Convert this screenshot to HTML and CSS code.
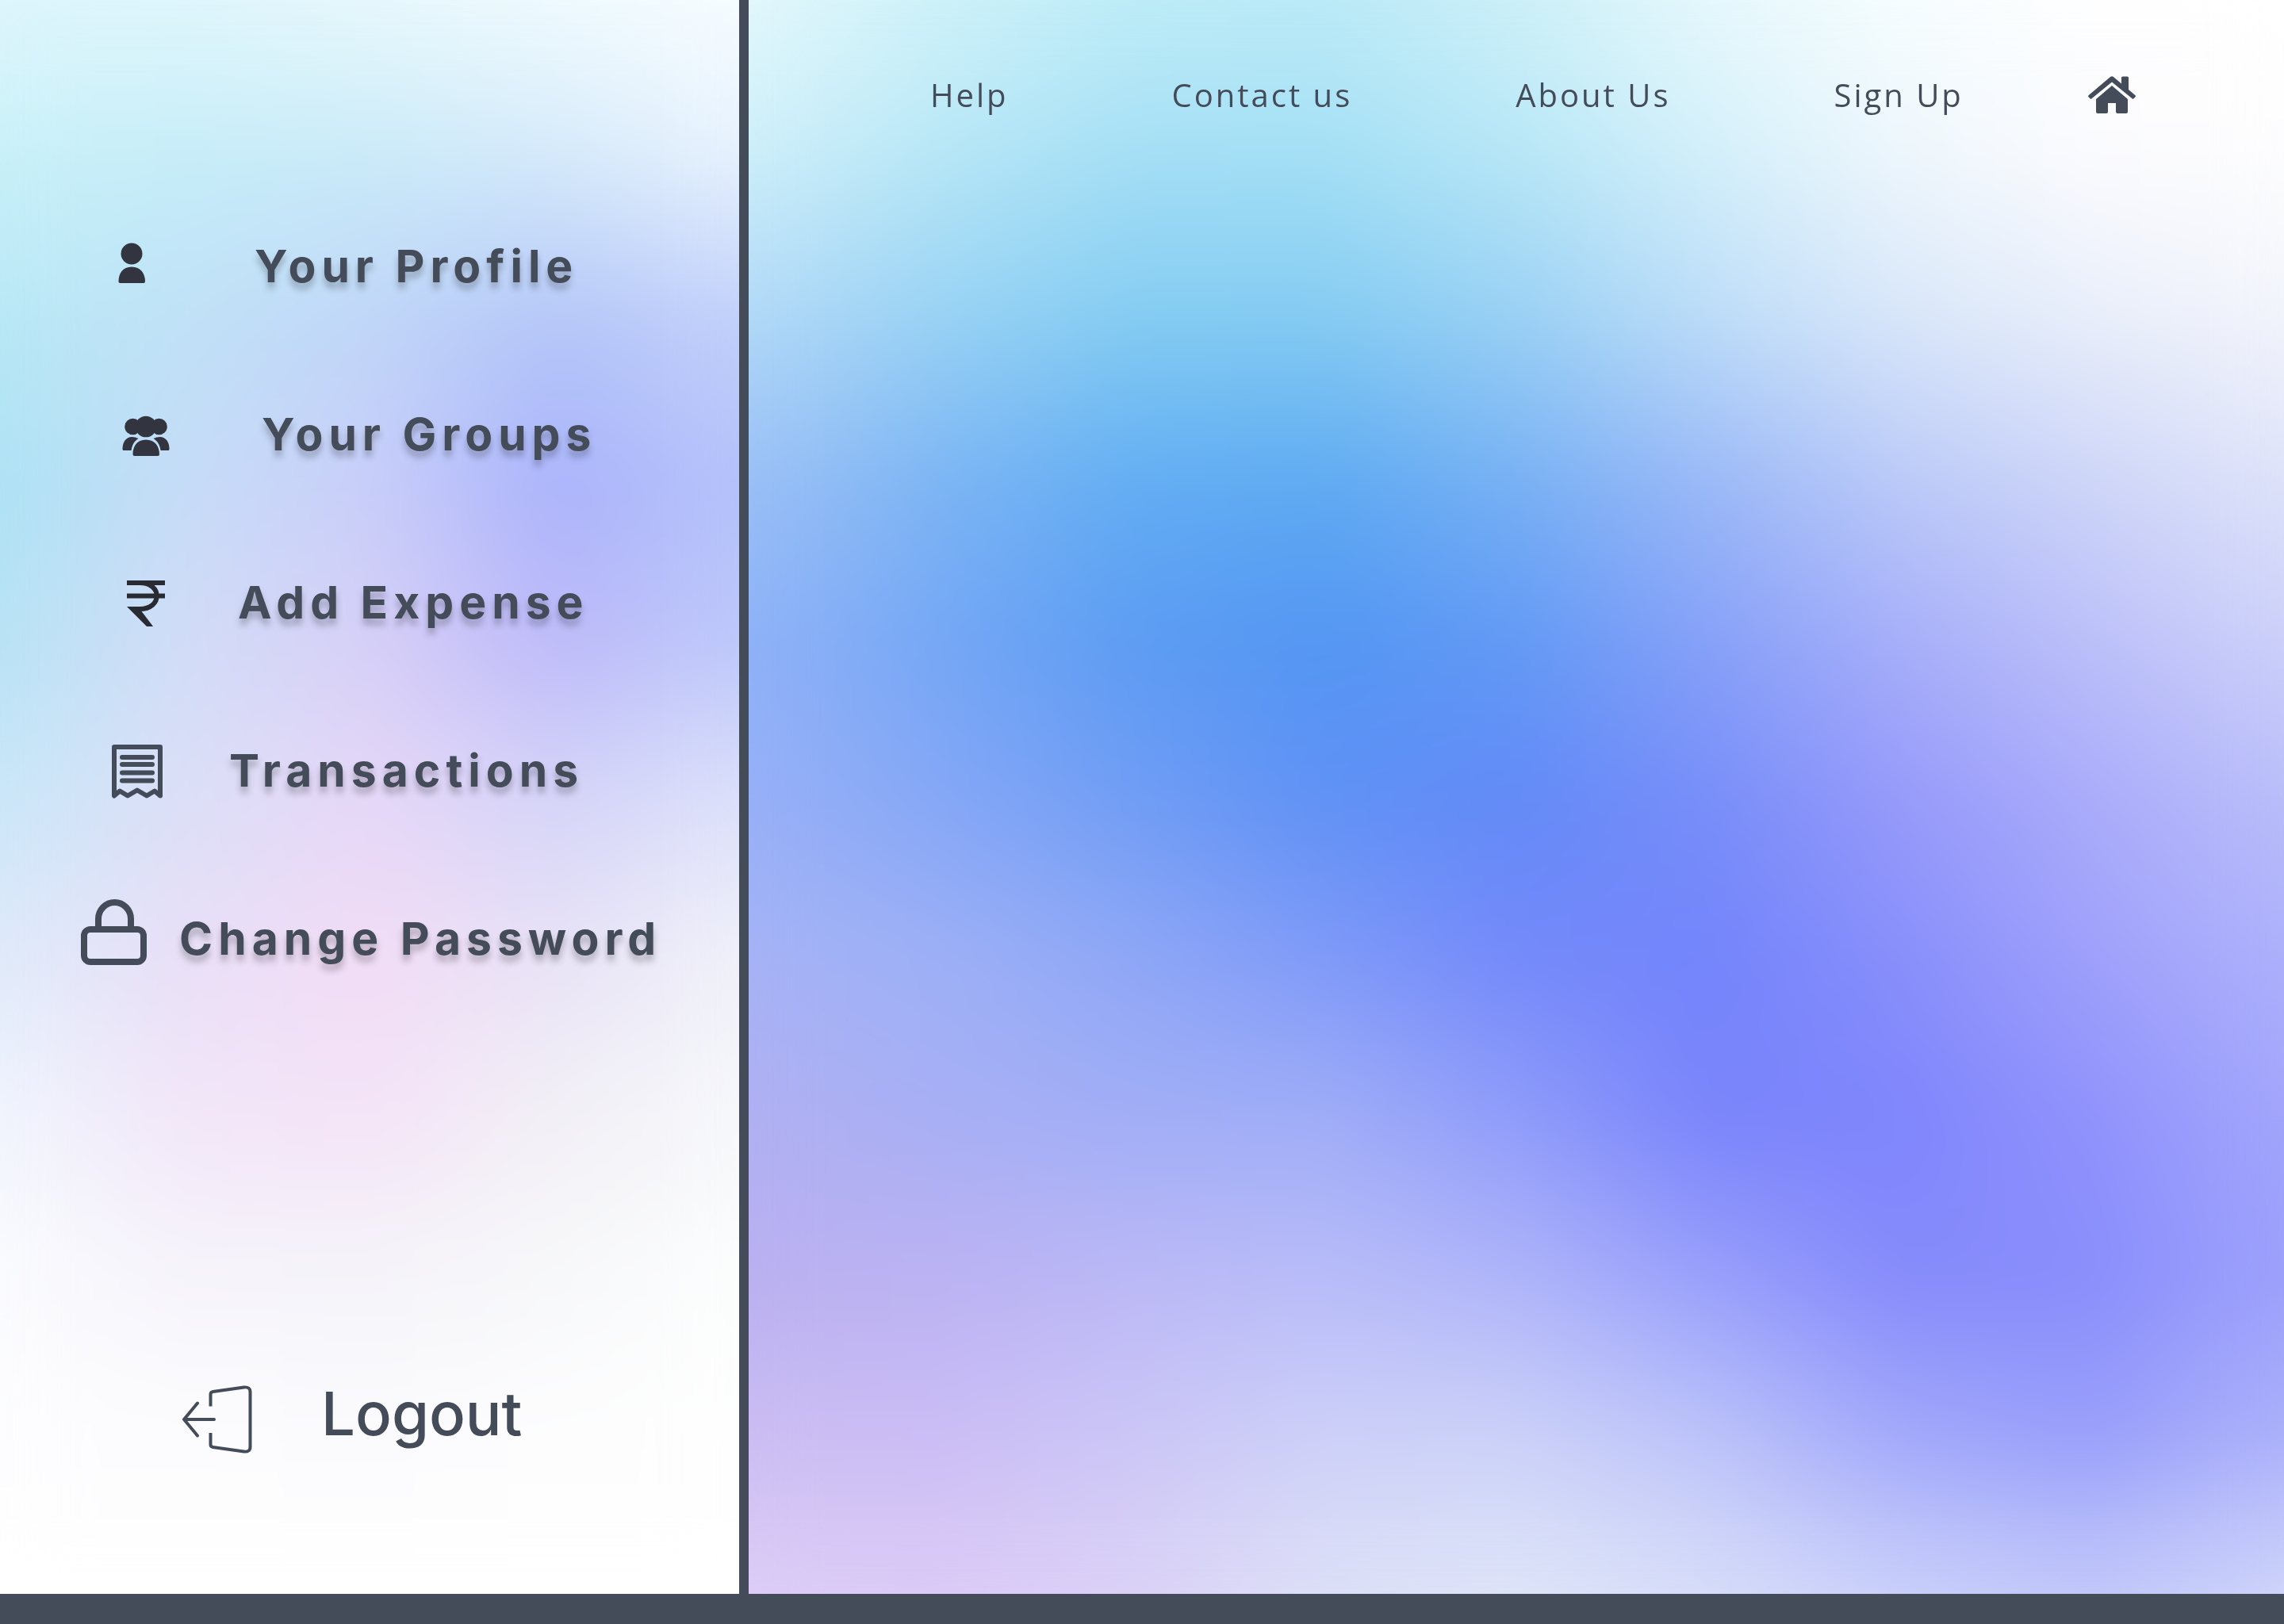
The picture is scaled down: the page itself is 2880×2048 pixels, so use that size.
FILE: index.html
```html
<!DOCTYPE html>
<html lang="en">
<head>
<meta charset="utf-8">
<meta name="viewport" content="width=device-width, initial-scale=1">
<title>Dashboard</title>
<link rel="stylesheet" href="styles.css">
</head>
<body>
<div class="app">
  <aside class="sidebar">
    <div class="mesh mesh-side" aria-hidden="true"><i></i><i></i><i></i><i></i><i></i><i></i><i></i><i></i><i></i><i></i><i></i></div>
    <nav class="menu" aria-label="Account">
      <a class="item item-profile" href="#profile">
        <svg width="34" height="100" viewBox="149 286 34 100" fill="#32353f" aria-hidden="true"><circle cx="166" cy="320" r="13.5"/><path d="M149.500 355c0-10 5-18.500 16.500-18.500s17 8.500 17 18.500q0 2-2 2h-29.500q-2 0-2-2z"/></svg>
        <span>Your Profile</span>
      </a>
      <a class="item item-groups" href="#groups">
        <svg width="60" height="100" viewBox="154 498 60 100" fill="#32353f" aria-hidden="true"><circle cx="167.500" cy="538" r="10.300"/><circle cx="200.500" cy="538" r="10.300"/><circle cx="184" cy="538" r="13.300"/><path d="M167.500 573c0-10 5-18.500 16.500-18.500s17 8.500 17 18.500q0 2-2 2h-29.500q-2 0-2-2zM154.500 566c0-8 4-15 12-15q4 0 8 2c-5 3-8 8-9 15h-10q-1 0-1-2zM213.500 566c0-8-4-15-12-15q-4 0-8 2c5 3 8 8 9 15h10q1 0 1-2z"/></svg>
        <span>Your Groups</span>
      </a>
      <a class="item item-expense" href="#expense">
        <svg width="48" height="100" viewBox="160 710 48 100" fill="none" stroke="#292b33" stroke-width="6" aria-hidden="true"><path d="M160 735h48M160 751.500h48M176 735c29 0 29 33 0 33h-9"/><path d="M160 765h14l19 25h-8z" fill="#292b33" stroke="none"/></svg>
        <span>Add Expense</span>
      </a>
      <a class="item item-transactions" href="#transactions">
        <svg width="64" height="100" viewBox="141 922 64 100" fill="none" stroke="#444b59" stroke-width="6" stroke-linejoin="round" stroke-linecap="round" aria-hidden="true"><path d="M144 1003.500V942h58v61.500l-7-6-10 6-12-7-12 7-10-6z"/><path d="M154 955h38M154 964h38M154 974.500h38M154 984.500h38"/></svg>
        <span>Transactions</span>
      </a>
      <a class="item item-password" href="#password">
        <svg width="84" height="100" viewBox="102 1134 84 100" fill="none" stroke="#444b59" stroke-width="8" aria-hidden="true"><rect x="106" y="1172" width="75" height="41" rx="8"/><path d="M124 1172v-13a20.500 21 0 0 1 41 0v13"/></svg>
        <span>Change Password</span>
      </a>
    </nav>
    <button class="logout" type="button">
      <svg width="90" height="100" viewBox="229 1740 90 100" fill="none" stroke="#444b59" stroke-width="4" stroke-linejoin="round" aria-hidden="true"><path d="M265.500 1773.500v-15q0-3 3-3.500l39-5.500q8-1 8 6v69q0 7-8 6l-39-5.500q-3-.500-3-3.500v-14.500"/><path d="M270 1790h-38M249 1769.500l-17 20.500 17 20.500" stroke-linecap="round"/></svg>
      <span>Logout</span>
    </button>
  </aside>
  <main class="main">
    <div class="mesh mesh-main" aria-hidden="true"><i></i><i></i><i></i><i></i><i></i><i></i><i></i><i></i><i></i><i></i><i></i></div>
    <nav class="topnav" aria-label="Site">
      <div class="links">
        <a href="#help">Help</a>
        <a href="#contact">Contact us</a>
        <a href="#about">About Us</a>
        <a href="#signup">Sign Up</a>
      </div>
      <a href="#home" aria-label="Home">
        <svg width="60" height="48" viewBox="0 0 60 48" fill="#444b59" aria-hidden="true"><path d="M30 12 50 29v16q0 2-2 2H37q-2 0-2-2V34H25v11q0 2-2 2H12q-2 0-2-2V29z"/><path d="M28 1q2-1.500 4 0l10 8.500V2q0-1.500 1.500-1.500h6Q51 .500 51 2v15l8.500 7.300q1 1 0 2l-2 2q-1 1-2 0L30 7.500 4.500 28.300q-1 1-2 0l-2-2q-1-1 0-2z"/></svg>
      </a>
    </nav>
  </main>
  <footer class="footer"></footer>
</div>
</body>
</html>
```
FILE: styles.css
```css
* { box-sizing: border-box; }

body {
  margin: 0;
  color: #444b59;
  font-family: Inter, "Liberation Sans", sans-serif;
}

a { color: inherit; text-decoration: none; }
svg { display: block; flex: none; overflow: visible; }

.app {
  min-height: 100vh;
  display: grid;
  grid-template-columns: minmax(0, 59fr) minmax(0, 121fr);
  grid-template-rows: 1fr 38px;
}

.footer { grid-column: 1 / -1; background: #444b59; }

.sidebar {
  position: relative;
  isolation: isolate;
  display: flex;
  flex-direction: column;
  justify-content: space-between;
  padding: 286px 0 170px;
  border-right: 12px solid #444b59;
}

.menu { display: flex; flex-direction: column; gap: 112px; }

.item {
  display: flex;
  align-items: center;
  height: 100px;
  font-size: 57px;
  font-weight: 700;
  letter-spacing: 7px;
  line-height: 100px;
  white-space: nowrap;
  text-shadow: 0 8px 8px rgba(0, 0, 0, .25);
}

.item-profile { padding-left: 149px; gap: 138px; }
.item-groups { padding-left: 154px; gap: 116px; }
.item-expense { padding-left: 160px; gap: 92px; }
.item-transactions { padding-left: 141px; gap: 84px; }
.item-password { padding-left: 102px; gap: 40px; }

.logout {
  display: flex;
  align-items: center;
  gap: 86px;
  margin: 0;
  padding: 0 0 0 229px;
  border: 0;
  background: none;
  color: inherit;
  font: 500 76px/84px Inter, "Liberation Sans", sans-serif;
}

.logout span { padding-bottom: 16px; }

.main { position: relative; isolation: isolate; }

.topnav {
  display: flex;
  align-items: center;
  justify-content: space-between;
  padding: 90px 187px 0 229px;
  font: 400 40px/60px "Open Sans", "Noto Sans", sans-serif;
  letter-spacing: 3px;
  white-space: nowrap;
}

.links { display: flex; gap: 206px; }

/* Colour mesh: each layer is one horizontal gradient that fades in
   from the row above it, so neighbouring rows blend into each other. */
.mesh {
  position: absolute;
  inset: 0;
  z-index: -1;
  display: grid;
  overflow: hidden;
}

.mesh i { grid-area: 1 / 1; }

.mesh::after {
  content: "";
  position: absolute;
  inset: 0;
  backdrop-filter: blur(40px);
}

.mesh i:nth-child(2) { mask-image: linear-gradient(transparent 0%, #000 10%); }
.mesh i:nth-child(3) { mask-image: linear-gradient(transparent 10%, #000 20%); }
.mesh i:nth-child(4) { mask-image: linear-gradient(transparent 20%, #000 30%); }
.mesh i:nth-child(5) { mask-image: linear-gradient(transparent 30%, #000 40%); }
.mesh i:nth-child(6) { mask-image: linear-gradient(transparent 40%, #000 50%); }
.mesh i:nth-child(7) { mask-image: linear-gradient(transparent 50%, #000 60%); }
.mesh i:nth-child(8) { mask-image: linear-gradient(transparent 60%, #000 70%); }
.mesh i:nth-child(9) { mask-image: linear-gradient(transparent 70%, #000 80%); }
.mesh i:nth-child(10) { mask-image: linear-gradient(transparent 80%, #000 90%); }
.mesh i:nth-child(11) { mask-image: linear-gradient(transparent 90%, #000 100%); }

.mesh-side i:nth-child(1) { background: linear-gradient(90deg, #dff6fc, #e0f6fc, #e8f8fc, #f0fbfe, #f8fdff); }
.mesh-side i:nth-child(2) { background: linear-gradient(90deg, #c8f0f8, #c6edf8, #c9eaf8, #d4e9fa, #e6f1fd); }
.mesh-side i:nth-child(3) { background: linear-gradient(90deg, #b8e8f5, #c0e1f7, #c0d6f8, #b4c6f8, #c2d0fa); }
.mesh-side i:nth-child(4) { background: linear-gradient(90deg, #ade2f4, #c6dcf7, #c8cef9, #aab3fb, #b4c2fa); }
.mesh-side i:nth-child(5) { background: linear-gradient(90deg, #b7e3f5, #d2dcf7, #d6cff7, #bdb9f9, #bcc8fa); }
.mesh-side i:nth-child(6) { background: linear-gradient(90deg, #c9e7f8, #dcdff7, #e6d7f7, #d4d4f8, #dce0fa); }
.mesh-side i:nth-child(7) { background: linear-gradient(90deg, #dfeafa, #e9dff7, #f2dcf6, #e8e2f6, #f0f1f9); }
.mesh-side i:nth-child(8) { background: linear-gradient(90deg, #f0f5fd, #f2e6f8, #f4e3f7, #f2f0f6, #f6f7fb); }
.mesh-side i:nth-child(9) { background: linear-gradient(90deg, #fafbfe, #f6f4fb, #f5f4f9, #f7f8fa, #fcfdfd); }
.mesh-side i:nth-child(10) { background: linear-gradient(90deg, #fdfdff, #fcfcfe, #fbfbfe, #fdfdfe, #fefefe); }
.mesh-side i:nth-child(11) { background: #ffffff; }

.mesh-main i:nth-child(1) { background: linear-gradient(90deg, #e4f8fc, #cff2f9, #bfedf7, #bceaf7, #cdf0f8, #e6f8fc, #f6fdfe, #fefeff, #ffffff); }
.mesh-main i:nth-child(2) { background: linear-gradient(90deg, #cdeef9, #b6e6f6, #a4def5, #a3dff5, #b6e6f6, #d2effa, #edf6fc, #fbfbfe, #fdfdfe); }
.mesh-main i:nth-child(3) { background: linear-gradient(90deg, #b2d8f7, #98d2f4, #84ccf2, #84cbf2, #99d0f4, #bcdcf8, #d8e6f9, #e8eefa, #f2f4fb); }
.mesh-main i:nth-child(4) { background: linear-gradient(90deg, #9cc0f6, #7cb5f4, #63aef3, #5fabf2, #78b1f4, #9bb9f7, #bbcaf8, #ced6f8, #dee3f9); }
.mesh-main i:nth-child(5) { background: linear-gradient(90deg, #90b2f7, #74a7f5, #5c9cf3, #5396f3, #629af5, #87a1f8, #a7aff9, #bcc0f9, #cdd1f9); }
.mesh-main i:nth-child(6) { background: linear-gradient(90deg, #98b0f7, #85a7f6, #709df5, #5f91f5, #628af7, #788ef9, #979afa, #aaacfa, #babef9); }
.mesh-main i:nth-child(7) { background: linear-gradient(90deg, #a6b3f5, #9db0f6, #8fa7f6, #7f9af8, #7489fa, #7384fb, #888ffb, #9fa0fb, #adb1fb); }
.mesh-main i:nth-child(8) { background: linear-gradient(90deg, #b0b0f2, #a8aff4, #a1aef6, #a0adf7, #8f9cfa, #7a84fb, #7f85fc, #9092fc, #a3a6fb); }
.mesh-main i:nth-child(9) { background: linear-gradient(90deg, #bab0f0, #bbb2f3, #bbb8f6, #b8bcf8, #afb4f9, #989ffb, #858afb, #898dfc, #9da1fb); }
.mesh-main i:nth-child(10) { background: linear-gradient(90deg, #cbbdf2, #cbbdf5, #cbc6f6, #cdd0f8, #cbd1f8, #bcc3f9, #a2a8fa, #989efa, #acb1fa); }
.mesh-main i:nth-child(11) { background: linear-gradient(90deg, #ddcdf6, #dccbf6, #dcd2f6, #dde0f6, #dfe5f7, #d8def8, #ccd2f9, #c4caf9, #d0d6f9); }
```
